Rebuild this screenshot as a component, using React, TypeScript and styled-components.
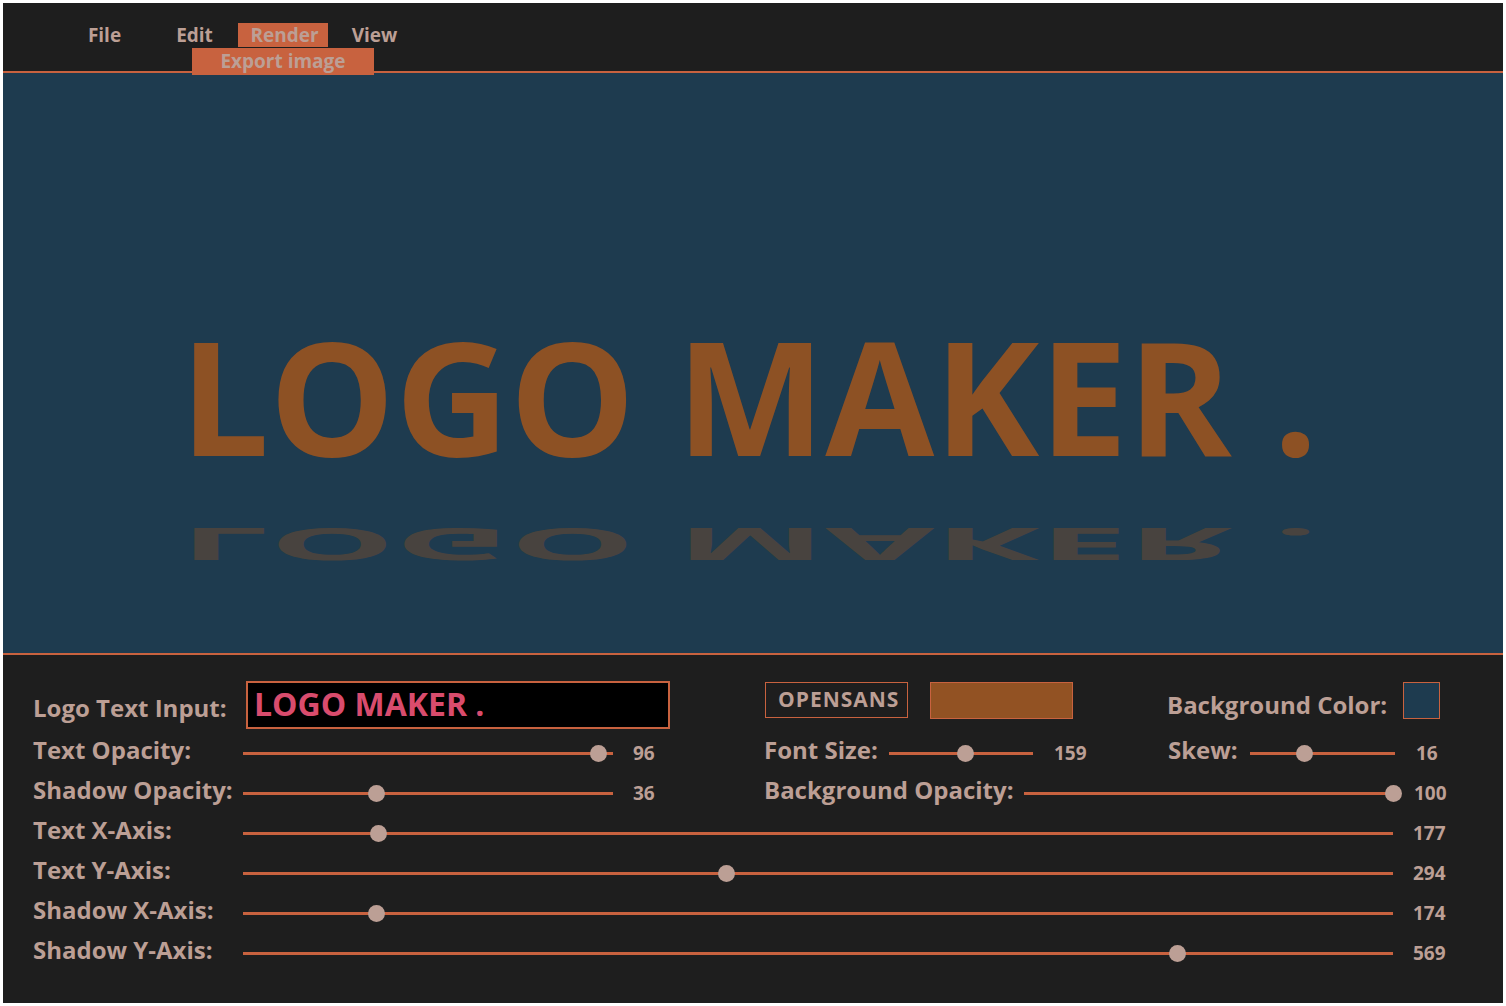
import React from "react"
import styled, { createGlobalStyle } from "styled-components"

const ORANGE = "#c8623f"
const BEIGE = "#bc9f95"
const TEXT_COLOR = "#925223"
const CANVAS_BG = "#1e3b4f"
const DARK = "#1e1e1e"

const GlobalStyle = createGlobalStyle`
  body {
    margin: 3px;
    background: #ffffff;
    font-family: "Open Sans", "DejaVu Sans", sans-serif;
  }
  * {
    box-sizing: border-box;
  }
`

const Frame = styled.div`
  width: 1500px;
  height: 1000px;
  display: flex;
  flex-direction: column;
  background: ${DARK};
`

const MenuBar = styled.nav`
  height: 70px;
  display: flex;
  align-items: flex-start;
  padding: 20px 0 0 55px;
  border-bottom: 2px solid ${ORANGE};
  position: relative;
  z-index: 2;
`

const MenuItem = styled.div<{ $active?: boolean }>`
  position: relative;
  width: 90px;
  height: 24px;
  padding-left: 3px;
  line-height: 24px;
  text-align: center;
  font-size: 19px;
  font-weight: 700;
  color: ${BEIGE};
  background: ${(p) => (p.$active ? ORANGE : "transparent")};
`

const Dropdown = styled.div`
  position: absolute;
  top: calc(100% + 1px);
  left: 50%;
  transform: translateX(-50%);
  width: 182px;
  height: 27px;
  line-height: 27px;
  text-align: center;
  background: ${ORANGE};
  color: ${BEIGE};
  font-size: 19px;
  font-weight: 700;
`

const Canvas = styled.section`
  height: 582px;
  flex-shrink: 0;
  position: relative;
  overflow: hidden;
  background: ${CANVAS_BG};
  border-bottom: 2px solid ${ORANGE};
`

const LogoText = styled.div<{ $mirror?: boolean }>`
  position: absolute;
  white-space: pre;
  font-size: 158px;
  line-height: 158px;
  font-weight: 700;
  color: ${TEXT_COLOR};
  transform-origin: 0 140px;
  transform: ${(p) => (p.$mirror ? "scaleY(-0.28)" : "none")};
`

const Panel = styled.section`
  flex: 1;
  padding: 26px 0 0 30px;
  display: flex;
  flex-direction: column;
`

const TopRow = styled.div`
  display: flex;
  align-items: flex-start;
  height: 48px;
  margin-bottom: 4px;
`

const Row = styled.div`
  display: flex;
  align-items: center;
  height: 40px;
`

const Label = styled.span<{ $w?: number; $top?: number; $left?: number }>`
  flex-shrink: 0;
  width: ${(p) => (p.$w ? `${p.$w}px` : "auto")};
  margin-top: ${(p) => (p.$top !== undefined ? `${p.$top}px` : "0")};
  margin-bottom: ${(p) => (p.$top !== undefined ? "0" : "8px")};
  margin-left: ${(p) => (p.$left ? `${p.$left}px` : "0")};
  font-size: 24px;
  font-weight: 700;
  color: ${BEIGE};
  white-space: nowrap;
`

const TextInput = styled.input`
  width: 424px;
  height: 48px;
  margin-left: 3px;
  padding: 0 0 3px 6px;
  background: #000000;
  border: 2px solid ${ORANGE};
  outline: none;
  color: #d94c6d;
  font-family: "Open Sans", "DejaVu Sans", sans-serif;
  font-size: 32px;
  font-weight: 700;
`

const FontButton = styled.button`
  width: 143px;
  height: 36px;
  margin: 1px 0 0 95px;
  padding: 0 0 2px 12px;
  text-align: left;
  background: transparent;
  border: 1px solid ${ORANGE};
  color: ${BEIGE};
  font-family: "Open Sans", "DejaVu Sans", sans-serif;
  font-size: 21px;
  font-weight: 700;
  letter-spacing: 1px;
`

const Swatch = styled.div<{ $color: string; $w: number; $left: number }>`
  width: ${(p) => p.$w}px;
  height: 37px;
  margin: 1px 0 0 ${(p) => p.$left}px;
  background: ${(p) => p.$color};
  border: 1px solid ${ORANGE};
`

const Track = styled.div<{ $w: number }>`
  position: relative;
  flex-shrink: 0;
  width: ${(p) => p.$w}px;
  height: 3px;
  background: ${ORANGE};
`

const Thumb = styled.span`
  position: absolute;
  top: 50%;
  width: 17px;
  height: 17px;
  margin: -8.5px 0 0 -8.5px;
  border-radius: 50%;
  background: ${BEIGE};
`

const Value = styled.span<{ $w?: number; $pad?: number }>`
  flex-shrink: 0;
  width: ${(p) => (p.$w ? `${p.$w}px` : "auto")};
  padding-left: ${(p) => (p.$pad ?? 20)}px;
  font-size: 19px;
  font-weight: 700;
  color: ${BEIGE};
`

interface SliderProps {
  width: number
  value: number
  min?: number
  max: number
}

function Slider({ width, value, min = 0, max }: SliderProps) {
  const pct = ((value - min) / (max - min)) * 100
  return (
    <Track $w={width}>
      <Thumb style={{ left: `${pct}%` }} />
    </Track>
  )
}

const wideRows = [
  { label: "Text X-Axis:", value: 177, max: 1500 },
  { label: "Text Y-Axis:", value: 294, max: 700 },
  { label: "Shadow X-Axis:", value: 174, max: 1500 },
  { label: "Shadow Y-Axis:", value: 569, max: 700 },
]

export default function App() {
  const logo = "LOGO MAKER ."
  return (
    <>
      <GlobalStyle />
      <Frame>
        <MenuBar>
          <MenuItem>File</MenuItem>
          <MenuItem>Edit</MenuItem>
          <MenuItem $active>
            Render
            <Dropdown>Export image</Dropdown>
          </MenuItem>
          <MenuItem>View</MenuItem>
        </MenuBar>

        <Canvas>
          <LogoText style={{ left: 177, top: 243, opacity: 0.96 }}>{logo}</LogoText>
          <LogoText $mirror style={{ left: 177, top: 315, opacity: 0.36 }}>
            {logo}
          </LogoText>
        </Canvas>

        <Panel>
          <TopRow>
            <Label $w={210} $top={10}>Logo Text Input:</Label>
            <TextInput defaultValue={logo} />
            <FontButton>OPENSANS</FontButton>
            <Swatch $color={TEXT_COLOR} $w={143} $left={22} />
            <Label $w={236} $top={7} $left={94}>Background Color:</Label>
            <Swatch $color={CANVAS_BG} $w={37} $left={0} />
          </TopRow>

          <Row>
            <Label $w={210}>Text Opacity:</Label>
            <Slider width={370} value={96} max={100} />
            <Value $w={151}>96</Value>
            <Label $w={125}>Font Size:</Label>
            <Slider width={144} value={159} max={300} />
            <Value $w={135} $pad={21}>159</Value>
            <Label $w={82}>Skew:</Label>
            <Slider width={145} value={16} min={-25} max={85} />
            <Value $pad={21}>16</Value>
          </Row>

          <Row>
            <Label $w={210}>Shadow Opacity:</Label>
            <Slider width={370} value={36} max={100} />
            <Value $w={151}>36</Value>
            <Label $w={260}>Background Opacity:</Label>
            <Slider width={369} value={100} max={100} />
            <Value $pad={21}>100</Value>
          </Row>

          {wideRows.map((r) => (
            <Row key={r.label}>
              <Label $w={210}>{r.label}</Label>
              <Slider width={1150} value={r.value} max={r.max} />
              <Value>{r.value}</Value>
            </Row>
          ))}
        </Panel>
      </Frame>
    </>
  )
}
